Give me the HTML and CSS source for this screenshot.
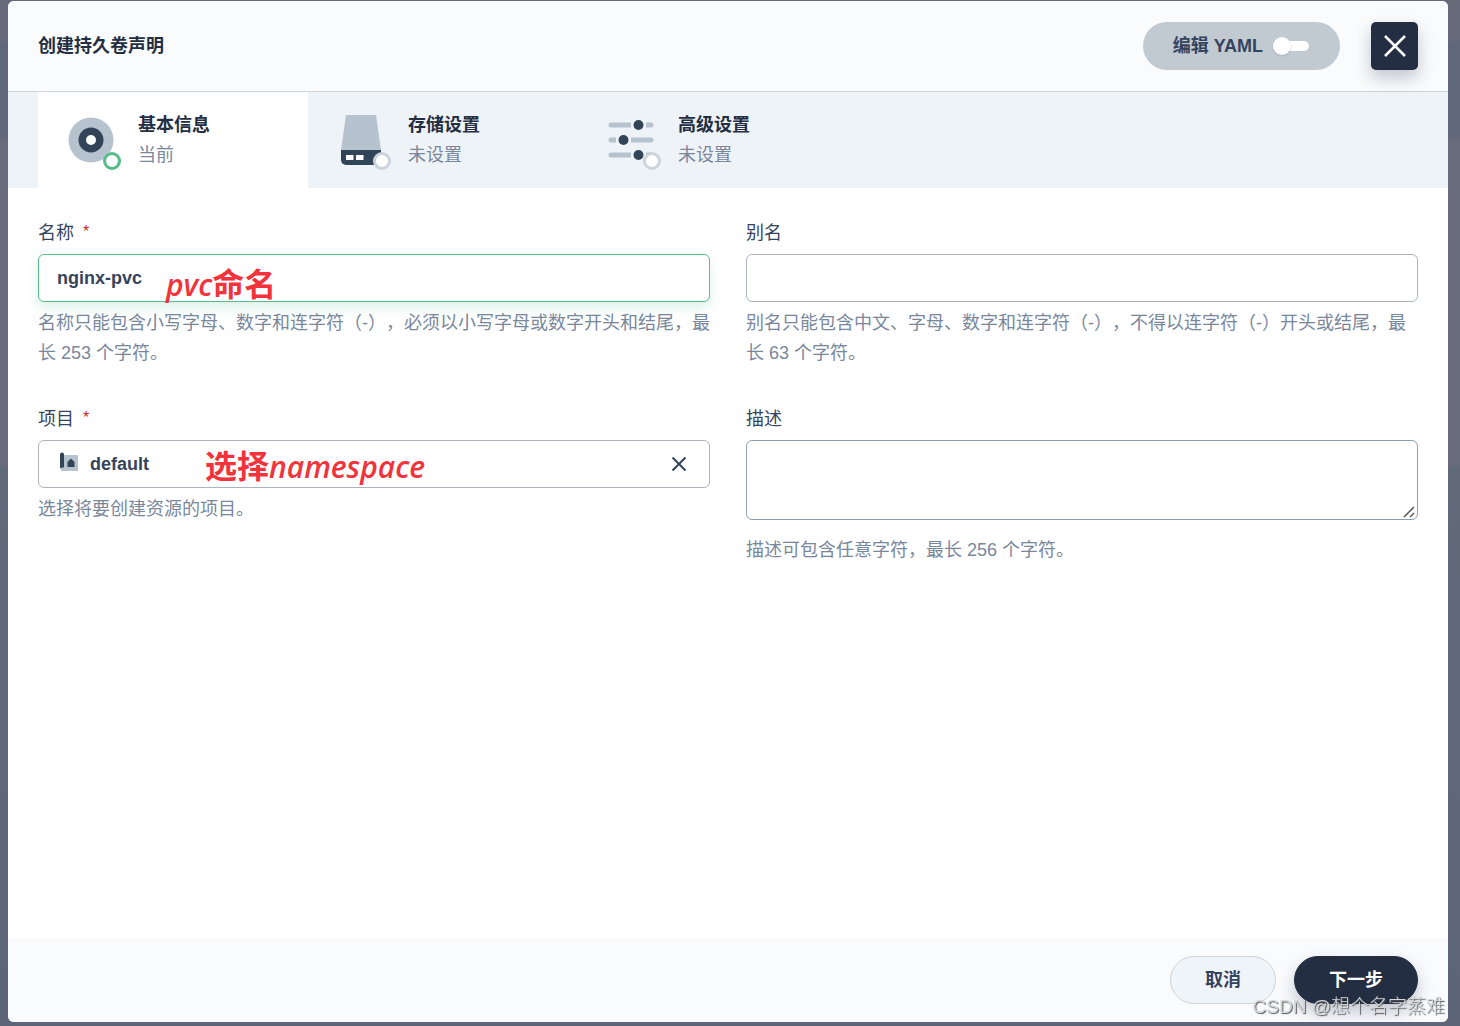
FILE: index.html
```html
<!DOCTYPE html>
<html lang="zh-CN">
<head>
<meta charset="utf-8">
<meta name="viewport" content="width=device-width, initial-scale=1">
<title>创建持久卷声明</title>
<link rel="stylesheet" href="styles.css">
</head>
<body>
<main class="modal">
  <header class="modal-header">
    <h1 class="modal-title">创建持久卷声明</h1>
    <button class="yaml-toggle" type="button" role="switch" aria-checked="false">编辑 YAML<span class="switch"></span></button>
    <button class="close" type="button" aria-label="关闭">
      <svg width="24" height="24" viewBox="0 0 24 24"><path d="M2 2 22 22M22 2 2 22" stroke="#fff" stroke-width="2.5"/></svg>
    </button>
  </header>

  <nav class="steps">
    <a class="step step-current" href="#basic">
      <span class="step-icon">
        <svg width="60" height="60" viewBox="0 0 60 60">
          <circle cx="30" cy="30" r="22.5" fill="#b6c2cd"/>
          <circle cx="30" cy="30" r="12.5" fill="#324558"/>
          <circle cx="30" cy="30" r="5" fill="#fff"/>
        </svg>
        <span class="dot"></span>
      </span>
      <span class="step-text"><strong>基本信息</strong><span>当前</span></span>
    </a>
    <a class="step" href="#storage">
      <span class="step-icon">
        <svg width="60" height="60" viewBox="0 0 60 60">
          <path d="M15 5H45L50 40H10Z" fill="#b6c2cd"/>
          <path d="M10 40H50V50A5 5 0 0 1 45 55H15A5 5 0 0 1 10 50Z" fill="#324558"/>
          <path d="M15 45H22.500V50H15ZM25 45H32.500V50H25Z" fill="#fff"/>
        </svg>
        <span class="dot"></span>
      </span>
      <span class="step-text"><strong>存储设置</strong><span>未设置</span></span>
    </a>
    <a class="step" href="#advanced">
      <span class="step-icon">
        <svg width="60" height="60" viewBox="0 0 60 60">
          <g fill="#b6c2cd">
            <path d="M10 12.500H30V17.500H10A2.500 2.500 0 0 1 10 12.500ZM45 12.500H50A2.500 2.500 0 0 1 50 17.500H45Z"/>
            <path d="M10 27.500H15V32.500H10A2.500 2.500 0 0 1 10 27.500ZM30 27.500H50A2.500 2.500 0 0 1 50 32.500H30Z"/>
            <path d="M10 42.500H30V47.500H10A2.500 2.500 0 0 1 10 42.500ZM45 42.500H50A2.500 2.500 0 0 1 50 47.500H45Z"/>
          </g>
          <g fill="#324558"><circle cx="37.500" cy="15" r="5"/><circle cx="22.500" cy="30" r="5"/><circle cx="37.500" cy="45" r="5"/></g>
        </svg>
        <span class="dot"></span>
      </span>
      <span class="step-text"><strong>高级设置</strong><span>未设置</span></span>
    </a>
  </nav>

  <form class="form" id="pvc-form">
    <div class="field">
      <label for="name">名称 <span class="required">*</span></label>
      <div class="control-wrap">
        <input class="control control-active" id="name" type="text" value="nginx-pvc">
        <span class="note note-name"><i>pvc</i>命名</span>
      </div>
      <p class="hint">名称只能包含小写字母、数字和连字符（-），必须以小写字母或数字开头和结尾，最长 253 个字符。</p>
    </div>
    <div class="field">
      <label for="alias">别名</label>
      <input class="control" id="alias" type="text">
      <p class="hint">别名只能包含中文、字母、数字和连字符（-），不得以连字符（-）开头或结尾，最长 63 个字符。</p>
    </div>
    <div class="field">
      <label for="project">项目 <span class="required">*</span></label>
      <div class="control control-wrap picker">
        <svg width="20" height="24" viewBox="0 0 20 24">
          <path d="M5 3H19V19H2V15H5Z" fill="#b6c2cd"/>
          <path d="M1 2.500A1.500 1.500 0 0 1 5 2.500V15.500H3A2 2 0 0 0 1 17Z" fill="#324558"/>
          <path d="M8.500 10 12 6.500 15.500 10V15H8.500Z" fill="#324558"/>
        </svg>
        <select id="project"><option>default</option></select>
        <button class="clear" type="button" aria-label="清除">
          <svg width="16" height="16" viewBox="0 0 16 16"><path d="M1.500 1.500 14.500 14.500M14.500 1.500 1.500 14.500" stroke="#324558" stroke-width="2"/></svg>
        </button>
        <span class="note note-project">选择<i>namespace</i></span>
      </div>
      <p class="hint">选择将要创建资源的项目。</p>
    </div>
    <div class="field">
      <label for="description">描述</label>
      <textarea class="control description" id="description"></textarea>
      <p class="hint hint-description">描述可包含任意字符，最长 256 个字符。</p>
    </div>
  </form>

  <footer class="modal-footer">
    <button class="button" type="button">取消</button>
    <button class="button button-primary" type="submit" form="pvc-form">下一步</button>
  </footer>
</main>
<div class="watermark">CSDN @想个名字蒸难</div>
</body>
</html>
```
FILE: styles.css
```css
* { box-sizing: border-box; }

body {
  margin: 0;
  padding: 1px 12px 4px 8px;
  min-height: 100vh;
  display: flex;
  background: linear-gradient(#676b79 0, #676b79 40px, #5f687a 41px, #5f687a 136px, #676b7b 138px, #676b7b 465px, #616a79 467px, #5d6678 100%);
  color: #242e42;
  font: 18px/30px "Liberation Sans", "Noto Sans CJK SC", sans-serif;
  text-spacing-trim: space-all;
}

button, input, select, textarea { font: inherit; color: inherit; }
button { border: 0; padding: 0; cursor: pointer; }
svg { display: block; }

.modal {
  flex: 1;
  min-width: 0;
  display: flex;
  flex-direction: column;
  overflow: hidden;
  border-radius: 6px;
  background: #fff;
}

.modal-header {
  display: flex;
  align-items: center;
  padding: 21px 30px;
  border-bottom: 1px solid #ccd3db;
  background: #f9fbfd;
}
.modal-title { flex: 1; margin: 0; font-size: 18px; }

.yaml-toggle {
  display: flex;
  align-items: center;
  gap: 10px;
  height: 48px;
  margin-right: 31px;
  padding: 0 31px 0 30px;
  border-radius: 24px;
  background: #c1c9d1;
  color: #36435c;
  font-weight: bold;
}
.switch {
  position: relative;
  width: 36px;
  height: 10px;
  border-radius: 5px;
  background: #fff;
}
.switch::before {
  content: "";
  position: absolute;
  top: -4px;
  left: 0;
  width: 18px;
  height: 18px;
  border-radius: 50%;
  background: #fff;
  box-shadow: 0 1px 2px rgba(36, 46, 66, .15);
}

.close {
  display: grid;
  place-items: center;
  width: 47px;
  height: 48px;
  border-radius: 5px;
  background: #242e42;
  box-shadow: 0 8px 16px rgba(36, 46, 66, .25);
  z-index: 1;
}

.steps { display: flex; padding: 0 30px; background: #eef3f8; }
.step {
  display: flex;
  gap: 17px;
  width: 270px;
  padding: 18px 23px;
  color: #79879c;
  text-decoration: none;
}
.step-current { background: #fff; }
.step-icon { position: relative; }
.step-text { display: flex; flex-direction: column; }
.step strong { color: #242e42; }
.dot {
  position: absolute;
  left: 42px;
  top: 42px;
  width: 18px;
  height: 18px;
  border: 3px solid #ccd3db;
  border-radius: 50%;
  background: #fff;
}
.step-current .dot { border-color: #55bc8a; }

.form {
  flex: 1;
  display: grid;
  grid-template-columns: 1fr 1fr;
  align-content: start;
  gap: 36px;
  padding: 30px;
}
.field { min-width: 0; display: flex; flex-direction: column; gap: 6px; }
.field label { color: #36435c; }
.required { margin-left: 4px; color: #ca2621; font-size: 16px; line-height: 16px; vertical-align: 2px; }

.control {
  display: block;
  width: 100%;
  height: 48px;
  padding: 0 18px;
  border: 1px solid #abb4be;
  border-radius: 6px;
  outline: 0;
  background: #fff;
  color: #36435c;
  font-weight: bold;
}
.control-active {
  border-color: #55bc8a;
  box-shadow: 0 6px 12px rgba(85, 188, 138, .2);
}
.control-wrap { position: relative; }
.picker { display: flex; align-items: center; padding: 0 20px; gap: 11px; }
.picker select { flex: 1; min-width: 0; padding: 0; border: 0; outline: 0; appearance: none; background: none; font-weight: bold; }
.clear { padding: 2px; background: none; }
.description { height: 80px; border-color: #8f9fb0; resize: vertical; }
.description::-webkit-resizer {
  background: url("data:image/svg+xml,%3Csvg xmlns='http://www.w3.org/2000/svg' viewBox='0 0 15 15'%3E%3Cpath d='M2 13 12 3M8 13 12 9' stroke='%23555' stroke-width='1.5'/%3E%3C/svg%3E") no-repeat;
}

.hint { margin: 0; color: #79879c; }
.hint-description { margin-top: 9px; }

.note {
  position: absolute;
  color: #f2333b;
  font: bold 32px/36px "Noto Sans CJK SC", sans-serif;
  white-space: nowrap;
  pointer-events: none;
}
.note i { font: italic 600 30px/36px "Open Sans", sans-serif; }
.note-name { left: 128px; top: 10px; }
.note-project { left: 166px; top: 5px; }

.modal-footer {
  display: flex;
  justify-content: flex-end;
  gap: 18px;
  padding: 18px 30px;
  background: #f9fbfd;
}
.button {
  height: 48px;
  padding: 0 34px;
  border: 1px solid #ccd3db;
  border-radius: 24px;
  background: #eff4f9;
  color: #36435c;
  font-weight: bold;
}
.button-primary {
  border-color: #242e42;
  background: #242e42;
  color: #fff;
  box-shadow: 0 8px 16px rgba(36, 46, 66, .25);
}

.watermark {
  position: fixed;
  right: 15px;
  bottom: 4px;
  color: #d5d7da;
  font-size: 19px;
  font-weight: 300;
  text-shadow: 1px 1px 1px #555;
  pointer-events: none;
}
```
